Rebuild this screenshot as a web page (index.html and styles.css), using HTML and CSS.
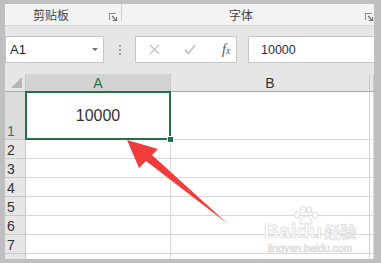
FILE: index.html
```html
<!DOCTYPE html>
<html lang="zh-CN">
<head>
    <meta charset="UTF-8">
    <title>Excel</title>
    <link rel="stylesheet" href="styles.css">
</head>
<body>
    <div class="app">
        <div class="ribbon">
            <div class="group group-clip">
                <span class="group-label">剪贴板</span>
                <svg class="launcher" width="8" height="8" viewBox="0 0 8 8">
                    <path d="M0.5 7V0.5H7" fill="none" stroke="#8a8a8a" stroke-width="1"/>
                    <path d="M3 3L7.5 7.5M4 7.5H7.5V4" fill="none" stroke="#6a6a6a" stroke-width="1.2"/>
                </svg>
            </div>
            <div class="group-sep"></div>
            <div class="group group-font">
                <span class="group-label">字体</span>
                <svg class="launcher" width="8" height="8" viewBox="0 0 8 8">
                    <path d="M0.5 7V0.5H7" fill="none" stroke="#8a8a8a" stroke-width="1"/>
                    <path d="M3 3L7.5 7.5M4 7.5H7.5V4" fill="none" stroke="#6a6a6a" stroke-width="1.2"/>
                </svg>
            </div>
        </div>

        <div class="formula-band">
            <div class="name-box">
                <span>A1</span>
                <span class="caret"></span>
            </div>
            <div class="grip">
                <i></i><i></i><i></i>
            </div>
            <div class="fx-buttons">
                <svg width="11" height="11" viewBox="0 0 11 11">
                    <path d="M1 1L10 10M10 1L1 10" stroke="#c4c4c4" stroke-width="1.4"/>
                </svg>
                <svg width="12" height="11" viewBox="0 0 12 11">
                    <path d="M1 6L4.5 9.5L11 1" fill="none" stroke="#c4c4c4" stroke-width="1.8"/>
                </svg>
                <span class="fx">f<sub>x</sub></span>
            </div>
            <div class="formula-input">10000</div>
        </div>

        <div class="sheet">
            <div class="corner"><span class="corner-tri"></span></div>
            <div class="col-head active">A</div>
            <div class="col-head">B</div>
            <div class="col-head"></div>

            <div class="row-head active">1</div>
            <div class="cell selected">10000<span class="handle"></span></div>
            <div class="cell"></div>
            <div class="cell"></div>

            <div class="row-head">2</div><div class="cell"></div><div class="cell"></div><div class="cell"></div>
            <div class="row-head">3</div><div class="cell"></div><div class="cell"></div><div class="cell"></div>
            <div class="row-head">4</div><div class="cell"></div><div class="cell"></div><div class="cell"></div>
            <div class="row-head">5</div><div class="cell"></div><div class="cell"></div><div class="cell"></div>
            <div class="row-head">6</div><div class="cell"></div><div class="cell"></div><div class="cell"></div>
            <div class="row-head">7</div><div class="cell"></div><div class="cell"></div><div class="cell"></div>
            <div class="row-head">8</div><div class="cell"></div><div class="cell"></div><div class="cell"></div>
        </div>

        <div class="watermark">
            <svg class="paw" width="26" height="20" viewBox="0 0 26 20">
                <g fill="#fbfbfb" stroke="#dcdcdc" stroke-width="1">
                    <ellipse cx="4" cy="9" rx="2.8" ry="3.3"/>
                    <ellipse cx="10" cy="4" rx="2.8" ry="3.3"/>
                    <ellipse cx="16" cy="4" rx="2.8" ry="3.3"/>
                    <ellipse cx="22" cy="9" rx="2.8" ry="3.3"/>
                    <path d="M7 18C7 12 10.5 10 13 10C15.5 10 19 12 19 18Z"/>
                </g>
            </svg>
            <div class="wm-main">Baidu<span class="wm-cn">经验</span></div>
            <div class="wm-url">jingyan.baidu.com</div>
        </div>

        <svg class="arrow" width="369" height="255" viewBox="5 4 369 255">
            <polygon points="127,140 158,149 152,155 228,224 146,161 139,168" fill="#f23b3b"/>
        </svg>
    </div>
</body>
</html>
```

FILE: styles.css
```css
body {
    margin: 0;
    background-color: #bfbfbf;
    font-family: "Liberation Sans", Arial, sans-serif;
}

.app {
    position: relative;
    width: 369px;
    height: 255px;
    margin: 4px 7px 4px 5px;
    background-color: #e6e6e6;
    overflow: hidden;
}

/* ribbon */
.ribbon {
    display: flex;
    height: 22px;
    background-color: #f3f3f3;
    border-bottom: 1px solid #d6d6d6;
    box-sizing: border-box;
}

.group {
    display: flex;
    align-items: center;
}

.group-clip {
    width: 116px;
}

.group-font {
    flex: 1;
}

.group-label {
    font-family: "Noto Sans CJK SC", sans-serif;
    font-size: 12px;
    color: #444;
    line-height: 1;
    margin-top: 1px;
}

.group-clip .group-label {
    padding-left: 28px;
}

.group-font .group-label {
    padding-left: 107px;
}

.launcher {
    margin-left: auto;
    align-self: flex-end;
    margin-bottom: 4px;
}

.group-clip .launcher {
    margin-right: 4px;
}

.group-font .launcher {
    margin-right: 1px;
}

.group-sep {
    width: 1px;
    height: 17px;
    background-color: #cfcfcf;
}

/* formula bar */
.formula-band {
    display: flex;
    height: 48px;
    padding-top: 10px;
    box-sizing: border-box;
}

.name-box,
.fx-buttons,
.formula-input {
    height: 27px;
    box-sizing: border-box;
    background-color: #fff;
    border: 1px solid #c6c6c6;
    display: flex;
    align-items: center;
}

.name-box {
    width: 99px;
    padding: 0 5px 0 4px;
    font-size: 13px;
    color: #222;
}

.caret {
    margin-left: auto;
    width: 0;
    height: 0;
    border-left: 3px solid transparent;
    border-right: 3px solid transparent;
    border-top: 3px solid #707070;
}

.grip {
    width: 31px;
    display: flex;
    flex-direction: column;
    align-items: center;
    justify-content: center;
    gap: 2px;
    height: 27px;
}

.grip i {
    width: 2px;
    height: 2px;
    background-color: #a0a0a0;
}

.fx-buttons {
    width: 102px;
    padding-left: 13px;
    gap: 24px;
}

.fx {
    font-family: "Liberation Serif", serif;
    font-style: italic;
    font-size: 14px;
    color: #555;
    margin-left: 2px;
}

.fx sub {
    font-size: 10px;
    vertical-align: 0;
}

.formula-input {
    flex: 1;
    margin-left: 11px;
    border-right: none;
    padding-left: 12px;
    font-size: 12.5px;
    color: #1f2d48;
}

/* sheet */
.sheet {
    display: grid;
    grid-template-columns: 21px 145px 199px 1fr;
    grid-template-rows: 18px 48px repeat(7, 19px);
    height: 185px;
    overflow: hidden;
    background-color: #fff;
}

.corner {
    position: relative;
    background-color: #e6e6e6;
    border-right: 1px solid #c8c8c8;
    border-bottom: 1px solid #ababab;
}

.corner-tri {
    position: absolute;
    right: 3px;
    bottom: 3px;
    width: 0;
    height: 0;
    border-left: 11px solid transparent;
    border-bottom: 11px solid #b5b5b5;
}

.col-head {
    background-color: #e6e6e6;
    border-right: 1px solid #c8c8c8;
    border-bottom: 1px solid #ababab;
    font-size: 14px;
    color: #333;
    display: flex;
    align-items: center;
    justify-content: center;
}

.col-head.active {
    background-color: #d3d3d3;
    color: #217346;
}

.row-head {
    background-color: #e6e6e6;
    border-right: 1px solid #c8c8c8;
    border-bottom: 1px solid #c8c8c8;
    font-size: 14px;
    color: #333;
    display: flex;
    align-items: flex-end;
    padding: 0 0 1px 2px;
    line-height: 1;
}

.row-head.active {
    background-color: #dcdcdc;
    color: #1e7a6e;
}

.cell {
    border-right: 1px solid #d9d9d9;
    border-bottom: 1px solid #d9d9d9;
}

.cell.selected {
    position: relative;
    display: flex;
    align-items: center;
    justify-content: center;
    font-size: 16px;
    color: #333;
}

.cell.selected::after {
    content: "";
    position: absolute;
    top: -1px;
    left: -1px;
    right: -1px;
    bottom: -1px;
    border: 2px solid #217346;
}

.handle {
    position: absolute;
    right: -4px;
    bottom: -4px;
    width: 5px;
    height: 5px;
    background-color: #217346;
    border: 1px solid #fff;
    z-index: 1;
}

/* overlays */
.watermark {
    position: absolute;
    left: 252px;
    top: 202px;
    width: 106px;
    text-align: center;
    color: #fbfbfb;
    -webkit-text-stroke: 0.7px #dadada;
}

.paw {
    display: block;
    margin: 0 0 -5px 36px;
}

.wm-main {
    font-family: "Liberation Sans", sans-serif;
    font-weight: bold;
    font-size: 21px;
    line-height: 20px;
    white-space: nowrap;
}

.wm-cn {
    font-family: "Noto Sans CJK SC", sans-serif;
    font-size: 16px;
    margin-left: 2px;
}

.wm-url {
    font-size: 10.5px;
    line-height: 12px;
    margin-top: 1px;
}

.arrow {
    position: absolute;
    left: 0;
    top: 0;
}
```
